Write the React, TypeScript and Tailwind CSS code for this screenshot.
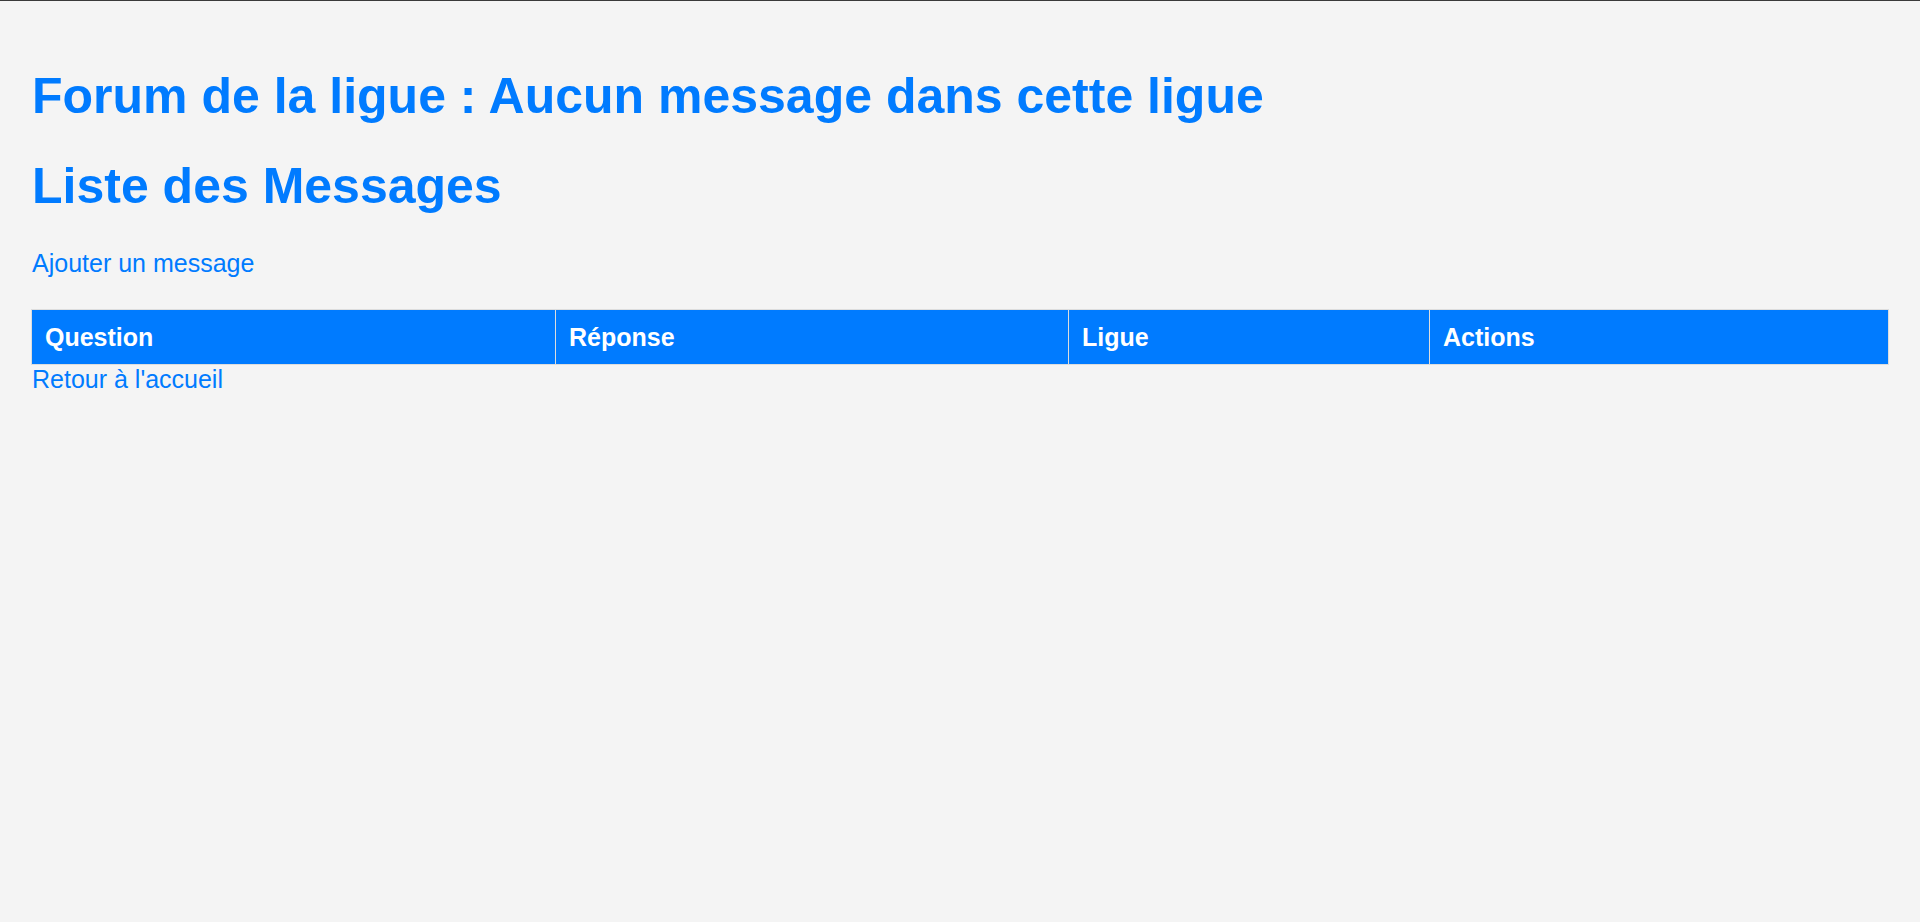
import React from 'react';

const columns = [
  { label: 'Question', width: 'w-[524px]' },
  { label: 'Réponse', width: 'w-[513px]' },
  { label: 'Ligue', width: 'w-[361px]' },
  { label: 'Actions', width: '' },
];

export default function App() {
  return (
    <div className="min-h-screen bg-[#f4f4f4] border-t border-[#3a3a3a] px-[31px] pt-[66px] font-['Liberation_Sans',Arial,sans-serif] text-[#007bff]">
      <h1 className="pl-px text-[50px] leading-[58px] font-bold">Forum de la ligue : Aucun message dans cette ligue</h1>
      <h2 className="mt-[32px] pl-px text-[50px] leading-[58px] font-bold">Liste des Messages</h2>

      <a href="#" className="mt-[34px] block w-fit pl-px text-[25px] leading-[29px]">
        Ajouter un message
      </a>

      {/* Messages table (empty) */}
      <table className="mt-[31px] w-full table-fixed border-collapse border border-[#dddddd]">
        <thead>
          <tr className="bg-[#007bff] text-white">
            {columns.map((c) => (
              <th
                key={c.label}
                className={`${c.width} border border-[#dddddd] pl-[13px] pr-[12px] py-[12px] text-left text-[25px] leading-[30px] font-bold`}
              >
                {c.label}
              </th>
            ))}
          </tr>
        </thead>
        <tbody />
      </table>

      <a href="#" className="block w-fit pl-px text-[25px] leading-[29px]">
        Retour à l'accueil
      </a>
    </div>
  );
}
